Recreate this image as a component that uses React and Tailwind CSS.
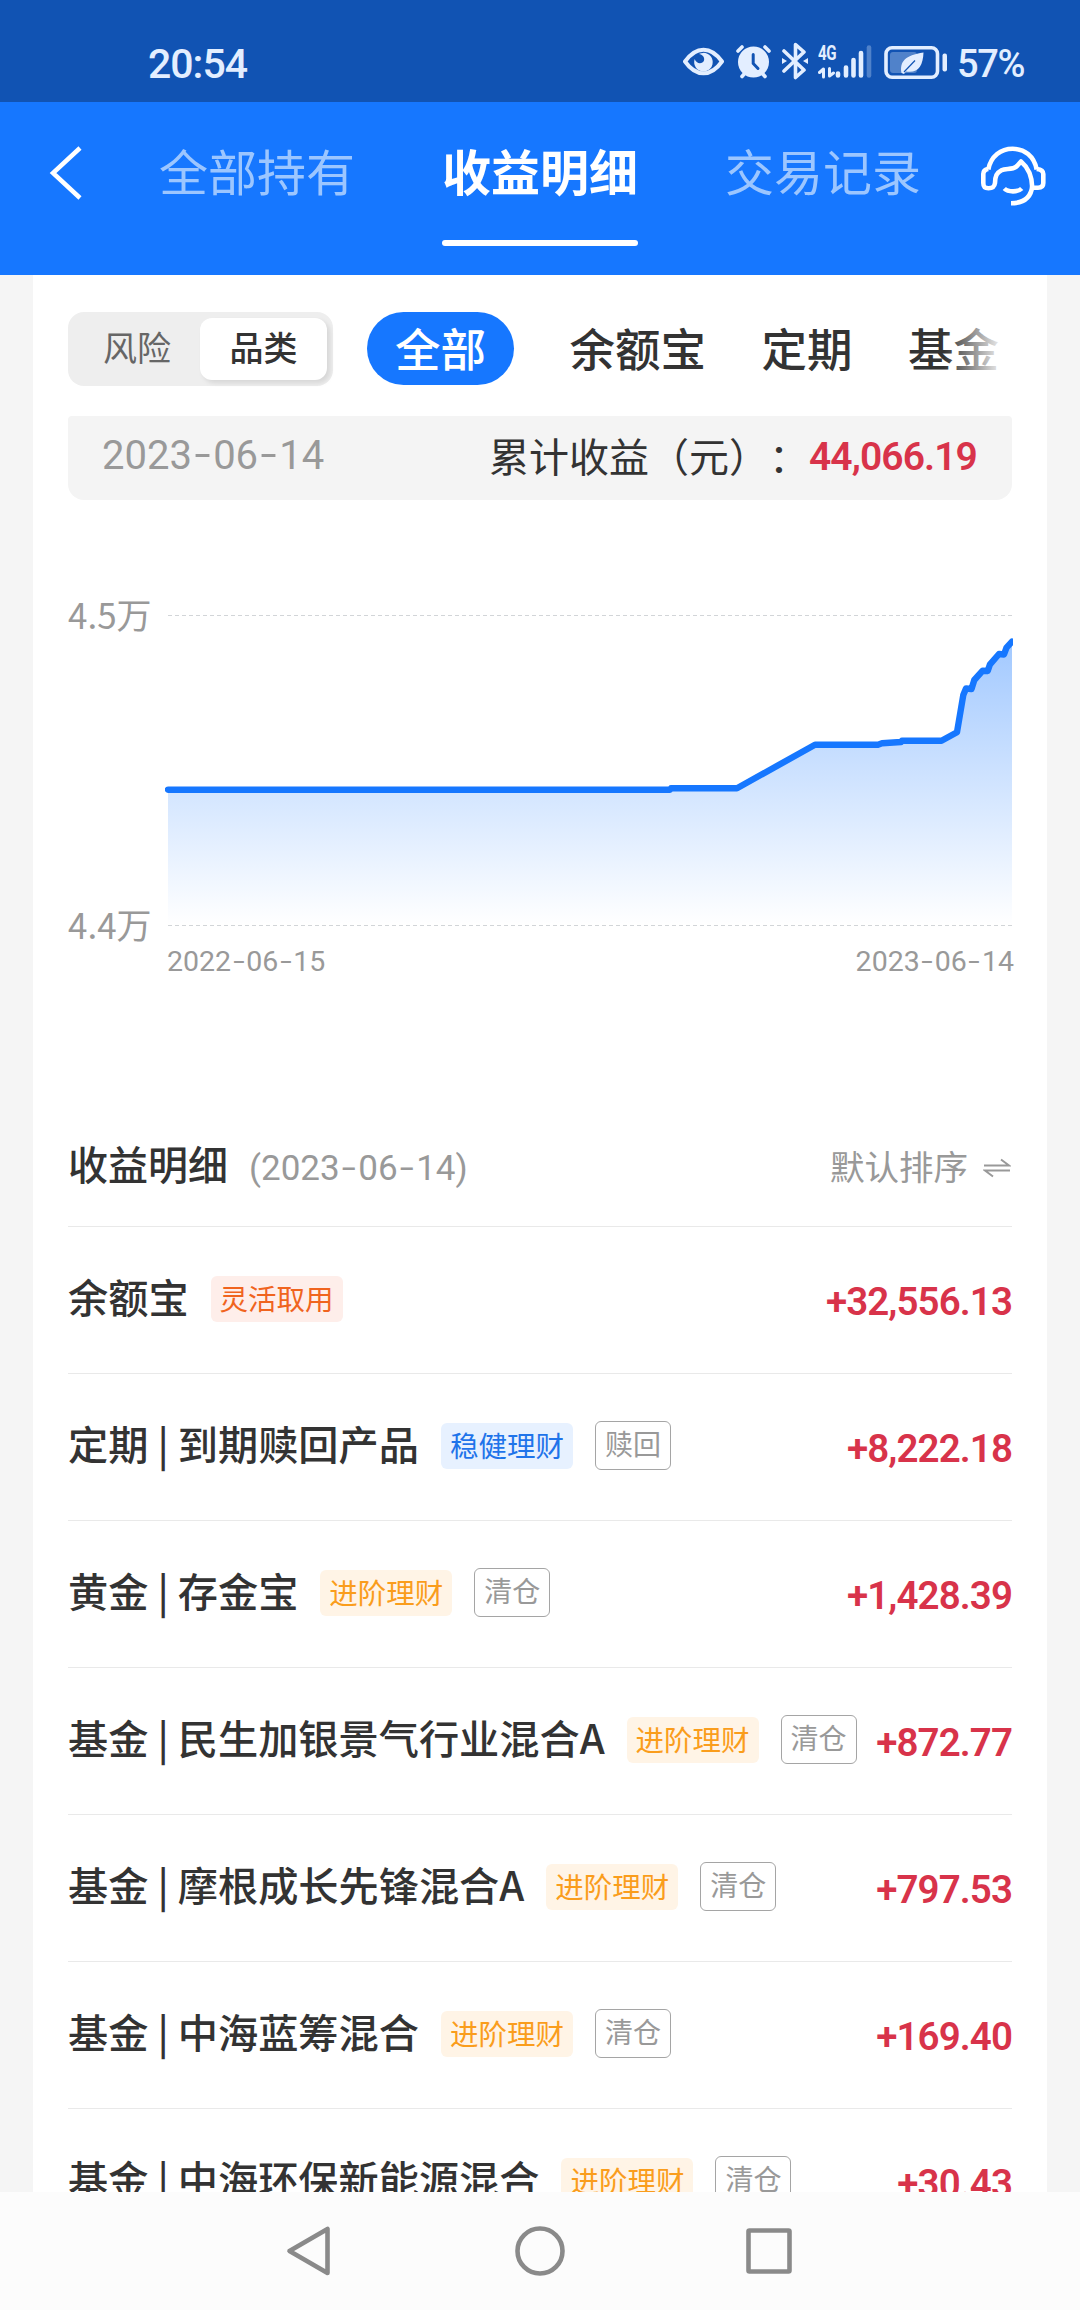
const TABS = ["全部持有", "收益明细", "交易记录"];

const CATEGORIES = ["余额宝", "定期", "基金"];

const TAG_STYLES = {
  orange: "bg-[#feeeea] text-[#f0641e]",
  blue: "bg-[#e7f1ff] text-[#1f74ea]",
  yellow: "bg-[#fff4e6] text-[#fa9d1c]",
};

const ROWS = [
  { name: "余额宝", tag: "灵活取用", color: "orange", amount: "+32,556.13" },
  { name: "定期 | 到期赎回产品", tag: "稳健理财", color: "blue", status: "赎回", amount: "+8,222.18" },
  { name: "黄金 | 存金宝", tag: "进阶理财", color: "yellow", status: "清仓", amount: "+1,428.39" },
  { name: "基金 | 民生加银景气行业混合A", tag: "进阶理财", color: "yellow", status: "清仓", amount: "+872.77" },
  { name: "基金 | 摩根成长先锋混合A", tag: "进阶理财", color: "yellow", status: "清仓", amount: "+797.53" },
  { name: "基金 | 中海蓝筹混合", tag: "进阶理财", color: "yellow", status: "清仓", amount: "+169.40" },
  { name: "基金 | 中海环保新能源混合", tag: "进阶理财", color: "yellow", status: "清仓", amount: "+30.43" },
];

const LINE =
  "M3 174.7H505L506 173.3H572L650 129.7H713L717 128.3L736 127L737 125.7H776.5L792 117.2L798.3 80L801 73.5L806.5 74L809.3 65L817.7 55.7L822.7 56L825 49.3L834 39L839 39.5L841.5 32.7L847 26.7";

function DateText({ value }) {
  const parts = value.split("-");
  return (
    <span className="whitespace-nowrap font-[Roboto,sans-serif]">
      {parts.map((p, i) => (
        <span key={i}>
          {i > 0 && <span className="inline-block scale-x-[1.45] mx-[0.127em] -translate-y-[0.03em]">-</span>}
          {p}
        </span>
      ))}
    </span>
  );
}

function StatusBar() {
  return (
    <div className="h-[102px] bg-[#1153b3] flex text-[#e3eeff] pl-[148px]">
      <span className="font-[Roboto,sans-serif] font-medium text-[41px] leading-[48px] tracking-[-1px] mt-[40px] w-[535px]">
        20:54
      </span>
      {/* Захист зору */}
      <svg className="w-[41px] h-[40px] mt-[41px]" viewBox="0 0 41 40" fill="none">
        <path d="M2 20.5C8 12 14 8.7 20.5 8.7S33 12 39 20.5C33 29 27 32.3 20.5 32.3S8 29 2 20.5Z" stroke="currentColor" strokeWidth="4" strokeLinejoin="round" />
        <path d="M16 13A9.3 9.3 0 1 1 11.7 18C13 23 19.5 23.5 21 19.5C22 16.5 19.5 13.5 16 13Z" fill="currentColor" />
      </svg>
      <svg className="w-[35px] h-[36px] mt-[43px] ml-[12px]" viewBox="0 0 35 36" fill="none" stroke="currentColor" strokeLinecap="round">
        <circle cx="17.5" cy="19" r="15.5" fill="currentColor" stroke="none" />
        <path d="M2 8L6 4M33 8L29 4M6 33.5L9 30M29 33.5L26 30" strokeWidth="3.6" />
        <path d="M17.2 11.5V20.5L22 25.5" stroke="#1153b3" strokeWidth="3" />
      </svg>
      <svg className="w-[26px] h-[38px] mt-[42px] ml-[11px]" viewBox="0 0 26 38" fill="none">
        <path d="M2 9L22 28L13.5 35.5V2.5L22 10L2 29" stroke="currentColor" strokeWidth="3.6" strokeLinejoin="round" strokeLinecap="round" />
        <path d="M0 16L5 19L0 22ZM26 16L21 19L26 22Z" fill="currentColor" />
      </svg>
      <div className="ml-[10px] mt-[44px] w-[54px] h-[36px] relative">
        <span className="absolute left-0 -top-[2px] font-[Roboto,sans-serif] font-bold text-[21px] leading-[22px] tracking-[-0.5px] origin-left scale-x-[0.72]">
          4G
        </span>
        <svg className="w-[54px] h-[36px]" viewBox="0 0 54 36" fill="none" stroke="currentColor" strokeLinecap="round" strokeWidth="4.6">
          <path d="M5.5 33V25L1.5 28.5M11.5 24.5V32L15.5 29" strokeWidth="3" strokeLinejoin="round" />
          <path d="M20 29.5V31.5M28 23.5V31.5M35.5 16V31.5M43 9V31.5" />
          <path d="M51 3.5V31.5" opacity="0.3" />
        </svg>
      </div>
      <svg className="w-[64px] h-[34px] mt-[46px] ml-[12px]" viewBox="0 0 64 34" fill="none">
        <rect x="2" y="1.8" width="51.5" height="29.5" rx="6" stroke="currentColor" strokeWidth="3.6" />
        <rect x="6" y="6" width="27" height="21" rx="3" fill="currentColor" opacity="0.3" />
        <path d="M17.5 27C15.5 16 21 9 39.5 6.5C39 20 34 27.5 22 25.5L20 28Z" fill="currentColor" />
        <path d="M20 26L31 14.5" stroke="#1153b3" strokeWidth="1.2" />
        <rect x="58.5" y="7.5" width="4.5" height="18" rx="2" fill="currentColor" />
      </svg>
      <span className="font-[Roboto,sans-serif] font-medium text-[38px] leading-[46px] tracking-[-1.3px] mt-[41px] ml-[9px]">57%</span>
    </div>
  );
}

function Header() {
  return (
    <header className="h-[173px] bg-[#1677ff] text-white flex pl-[49px]">
      <svg className="w-[34px] h-[54px] mt-[44px]" viewBox="0 0 34 54" fill="none" stroke="currentColor" strokeWidth="4.5">
        <path d="M31 2L4 27L31 52" />
      </svg>
      <nav className="flex ml-[76px] gap-[87px]">
        {TABS.map((t, i) => (
          <div key={t} className="w-[196px] pt-[35px]">
            <p className={`text-[49px] leading-[66px] whitespace-nowrap ${i === 1 ? "font-bold" : "text-[#9cc6ff]"}`}>{t}</p>
            {i === 1 && <div className="h-[6px] rounded-full bg-white mt-[37px]" />}
          </div>
        ))}
      </nav>
      <svg className="w-[66px] h-[62px] mt-[43px] ml-[59px]" viewBox="0 0 66 62" fill="none" stroke="currentColor" strokeWidth="4.6" strokeLinejoin="round">
        <path d="M8.3 24.500C11 11 21 3.800 32.700 3.800S54 11 56.700 24.500" />
        <path d="M8.300 24C5 24.500 3.300 26 3.300 29V38C3.300 42 5 43.200 8.500 43.200C13 43.200 14.500 41.500 15 38C15.200 31 16.500 28 21.500 25.300C26 22.800 32 25.500 37 21L41 16.500C47 21.500 52 30 52.300 42.700H58C62 42.700 63.300 41 63.300 38V29C63.300 26 61 24.500 56.700 24" />
        <path d="M52.300 41C51 53 43 58.200 31 58.200" />
        <path d="M24.300 43.500C28 47.300 38 47.300 41.700 43.500" />
      </svg>
    </header>
  );
}

function Filters() {
  return (
    <div className="flex pt-[37px]">
      <div className="w-[265px] h-[74px] shrink-0 rounded-2xl bg-[#eeeeee] flex p-[6px] text-[34px]">
        <div className="w-[126px] text-center leading-[58px] text-[#666]">风险</div>
        <div className="w-[127px] h-[62px] rounded-xl bg-white text-center leading-[58px] text-[#333] font-medium shadow-[3px_3px_5px_rgba(0,0,0,0.1)]">
          品类
        </div>
      </div>
      <div className="relative flex gap-[55.5px] ml-[34px] w-[633px] overflow-hidden text-[45.5px] leading-[70px] text-[#333] font-medium whitespace-nowrap">
        <span className="w-[147px] h-[73px] shrink-0 rounded-full bg-[#1677ff] text-white text-center">全部</span>
        {CATEGORIES.map((c) => (
          <span key={c}>{c}</span>
        ))}
        <div className="absolute right-0 top-0 w-[56px] h-full bg-linear-to-r from-white/0 to-white/90" />
      </div>
    </div>
  );
}

function Chart() {
  return (
    <div className="flex mt-[80px] text-[#999]">
      <div className="w-[97px] shrink-0 h-[380px] flex flex-col gap-[260px] text-[35px] leading-[50px] pt-[9px]">
        <span>4.5万</span>
        <span>4.4万</span>
      </div>
      <div className="w-[850px] shrink-0">
        <svg className="w-[850px] h-[350px]" viewBox="0 0 850 350" fill="none">
          <defs>
            <linearGradient id="area" x1="0" y1="26" x2="0" y2="310" gradientUnits="userSpaceOnUse">
              <stop offset="0" stopColor="#1677ff" stopOpacity="0.4" />
              <stop offset="1" stopColor="#1677ff" stopOpacity="0" />
            </linearGradient>
            <clipPath id="plot">
              <rect x="-1" y="0" width="849" height="350" />
            </clipPath>
          </defs>
          <path d="M3 35.500H848M3 345.500H848" stroke="#d2d5d8" strokeDasharray="4 3" />
          <g clipPath="url(#plot)" transform="translate(0 35)">
            <path d={`${LINE}V310H3Z`} fill="url(#area)" />
            <path d={LINE} stroke="#1677ff" strokeWidth="6.400" strokeLinejoin="round" strokeLinecap="round" />
          </g>
        </svg>
        <div className="flex justify-between pl-[2px] pr-[1px] text-[28.5px] leading-[36px] mt-[14px]">
          <DateText value="2022-06-15" />
          <DateText value="2023-06-14" />
        </div>
      </div>
    </div>
  );
}

function Row({ row }) {
  return (
    <li className="h-[147px] border-b border-[#e9e9e9] flex items-center">
      <span className="text-[40.2px] text-[#333] font-medium whitespace-nowrap -mt-[7px]">{row.name}</span>
      <span className={`ml-[22px] w-[132px] h-[46px] shrink-0 rounded-md text-center text-[28.5px] leading-[43px] -mt-[3px] ${TAG_STYLES[row.color]}`}>
        {row.tag}
      </span>
      {row.status && (
        <span className="ml-[22px] w-[76px] h-[49px] shrink-0 rounded-md border-[1.5px] border-[#a5a5a5] text-[#999] text-center text-[28px] leading-[43px] -mt-[3px]">
          {row.status}
        </span>
      )}
      <span className="ml-auto font-[Roboto,sans-serif] font-semibold text-[38.5px] tracking-[-0.9px] text-[#d8334a] mt-[3px]">{row.amount}</span>
    </li>
  );
}

function NavBar() {
  return (
    <div className="h-[118px] shrink-0 bg-[#fcfcfc]">
      <svg className="w-full h-full" viewBox="0 0 1080 118" fill="none" stroke="#8a8a8a" strokeWidth="4.600" strokeLinejoin="round">
        <path d="M327.500 37V81L289.500 59Z" />
        <circle cx="540" cy="59" r="22.500" />
        <rect x="748.500" y="38.500" width="41" height="41" rx="1" />
      </svg>
    </div>
  );
}

export default function App() {
  return (
    <div className="w-[1080px] h-[2310px] flex flex-col overflow-hidden bg-[#f5f5f5] font-['Noto_Sans_CJK_SC',sans-serif]">
      <StatusBar />
      <Header />
      <main className="h-[1917px] shrink-0 overflow-hidden mx-[33px] px-[35px] bg-white">
        <Filters />
        <div className="h-[84px] mt-[30px] rounded-t-sm rounded-b-2xl bg-[#f4f4f4] flex items-center pl-[34px] pr-[35px]">
          <span className="text-[40px] text-[#999] -mt-[8px]">
            <DateText value="2023-06-14" />
          </span>
          <span className="ml-auto text-[40px] text-[#333] -mt-[7px] whitespace-nowrap [text-spacing-trim:space-all]">累计收益（元）：</span>
          <span className="font-[Roboto,sans-serif] font-semibold text-[39px] tracking-[-0.9px] text-[#d8334a] -mt-[1px]">44,066.19</span>
        </div>
        <Chart />
        <div className="mt-[127px] h-[120px] flex items-center border-b border-[#e9e9e9]">
          <span className="text-[40px] text-[#333] font-medium -mt-[7px]">收益明细</span>
          <span className="ml-[21px] text-[35px] text-[#999] font-[Roboto,sans-serif] mt-[6px]">
            (<DateText value="2023-06-14" />)
          </span>
          <span className="ml-auto text-[34.5px] text-[#999] -mt-[1px]">默认排序</span>
          <svg className="w-[28px] h-[20px] ml-[15px] mr-[1px] mt-[3px]" viewBox="0 0 28 20" fill="none" stroke="#999" strokeWidth="2">
            <path d="M1 7.500H26L18 1.500M27 12.500H2L10 18.500" />
          </svg>
        </div>
        <ul>
          {ROWS.map((r) => (
            <Row key={r.name} row={r} />
          ))}
        </ul>
      </main>
      <NavBar />
    </div>
  );
}
